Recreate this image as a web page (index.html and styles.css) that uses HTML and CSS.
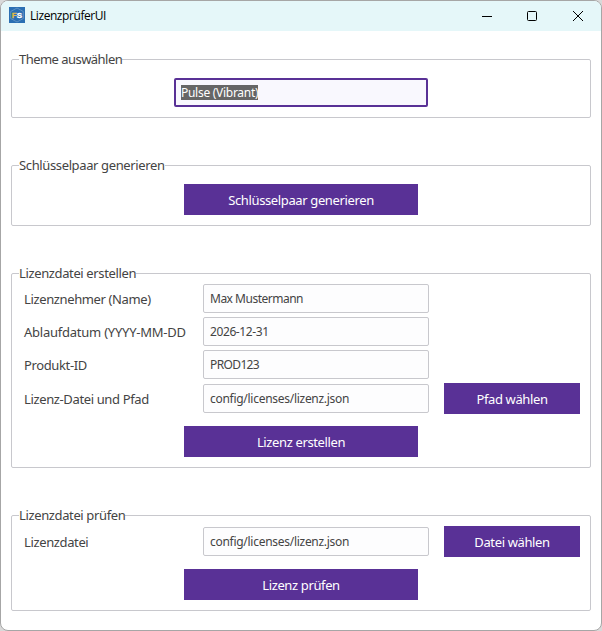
FILE: index.html
```html
<!DOCTYPE html>
<html lang="de">
<head>
<meta charset="utf-8">
<title>LizenzprüferUI</title>
<link rel="stylesheet" href="styles.css">
</head>
<body>
<div class="window">
  <header class="titlebar">
    <svg class="app-icon" width="16" height="16" viewBox="0 0 16 16">
      <rect width="16" height="16" fill="#2b6fb3"/>
      <path d="M8 1 L14.3 4.5 V11.5 L8 15 L1.7 11.5 V4.5 Z" fill="none" stroke="#83a9cd" stroke-width=".6"/>
      <text class="icon-text" x="2.8" y="11" fill="#e0bc45" stroke="#e0bc45">F</text>
      <text class="icon-text" x="7.8" y="11" fill="#ffffff" stroke="#ffffff">S</text>
    </svg>
    <span class="title">LizenzprüferUI</span>
    <div class="controls">
      <svg width="10" height="10" viewBox="0 0 10 10"><path d="M0 5.5H10" stroke="#000"/></svg>
      <svg width="10" height="10" viewBox="0 0 10 10"><rect x=".5" y=".5" width="9" height="9" rx="1" fill="none" stroke="#000"/></svg>
      <svg width="10" height="10" viewBox="0 0 10 10"><path d="M0 0L10 10M10 0L0 10" stroke="#000"/></svg>
    </div>
  </header>
  <main class="content">
    <section class="group theme">
      <h2 class="legend">Theme auswählen</h2>
      <div class="combo"><span class="selection">Pulse (Vibrant)</span></div>
    </section>
    <section class="group keys">
      <h2 class="legend">Schlüsselpaar generieren</h2>
      <button class="btn wide">Schlüsselpaar generieren</button>
    </section>
    <section class="group create">
      <h2 class="legend">Lizenzdatei erstellen</h2>
      <div class="row"><span class="label">Lizenznehmer (Name)</span><div class="field name">Max Mustermann</div></div>
      <div class="row"><span class="label date">Ablaufdatum (YYYY-MM-DD</span><div class="field code">2026-12-31</div></div>
      <div class="row"><span class="label">Produkt-ID</span><div class="field code product">PROD123</div></div>
      <div class="row browse"><span class="label">Lizenz-Datei und Pfad</span><div class="field">config/licenses/lizenz.json</div><button class="btn">Pfad wählen</button></div>
      <button class="btn wide">Lizenz erstellen</button>
    </section>
    <section class="group check">
      <h2 class="legend">Lizenzdatei prüfen</h2>
      <div class="row browse"><span class="label">Lizenzdatei</span><div class="field">config/licenses/lizenz.json</div><button class="btn">Datei wählen</button></div>
      <button class="btn wide">Lizenz prüfen</button>
    </section>
  </main>
</div>
</body>
</html>
```
FILE: styles.css
```css
* { box-sizing: border-box; }
body {
  margin: 0;
  background: #d9d9d9;
  font-family: "Noto Sans", "Open Sans", sans-serif;
  font-size: 13px;
  color: #444;
  letter-spacing: -0.37px;
}
.window {
  width: 602px;
  height: 631px;
  border: 1px solid #a6a6a6;
  border-radius: 8px;
  background: #fff;
  overflow: hidden;
}
.titlebar {
  height: 30px;
  display: flex;
  align-items: center;
  padding: 0 18px 0 8px;
  background: #e5f7f9;
}
.app-icon { margin-bottom: 2px; }
.icon-text {
  font: bold 8px "Liberation Sans", sans-serif;
  letter-spacing: 0;
  stroke-width: 0.3px;
}
.title {
  margin-left: 5px;
  font-family: "Open Sans", sans-serif;
  font-size: 12px;
  line-height: 16px;
  color: #000;
  letter-spacing: -0.43px;
}
.controls {
  margin-left: auto;
  display: flex;
  gap: 36px;
}
.controls svg { display: block; margin-bottom: 1px; }
.controls svg:first-child { margin-right: -1px; }
.content {
  display: flex;
  flex-direction: column;
  gap: 47px;
  padding: 28px 10px 0;
}
.group {
  border: 1px solid #c8c8cd;
  border-radius: 2px;
  display: flex;
  flex-direction: column;
}
.theme { height: 59px; }
.keys { height: 61px; }
.create { height: 195px; }
.check { height: 96px; }
.legend {
  align-self: flex-start;
  margin: -11px 0 1px 7px;
  height: 20px;
  line-height: 20px;
  background: #fff;
  font-size: 13px;
  font-weight: 400;
  white-space: nowrap;
}
.theme .legend { letter-spacing: -0.54px; }
.combo {
  width: 254px;
  height: 29px;
  margin: 8px 0 0 162px;
  border: 2px solid #593196;
  border-radius: 2px;
  background: #f9f8fe;
  display: flex;
  align-items: center;
  padding-left: 5px;
}
.selection {
  background: #666;
  color: #fff;
  font-size: 12px;
  line-height: 15px;
  letter-spacing: -0.28px;
  white-space: nowrap;
}
.btn {
  height: 31px;
  width: 136px;
  flex: none;
  padding: 2px 0 0;
  border: 0;
  background: #593196;
  color: #fff;
  font: inherit;
  letter-spacing: inherit;
  line-height: 29px;
}
.btn.wide {
  width: 234px;
  margin-left: 172px;
}
.keys .wide { margin-top: 8px; }
.row {
  display: grid;
  grid-template-columns: 179px 226px 136px;
  align-items: center;
  height: 29px;
  margin: 0 0 4px 12px;
}
.browse { height: 31px; margin-bottom: 12px; }
.browse .btn { margin-left: 15px; }
.label { white-space: nowrap; }
.label.date { letter-spacing: -0.24px; }
.field {
  height: 29px;
  border: 1px solid #c8c8cd;
  border-radius: 2px;
  background: #fdfdfe;
  padding-left: 6px;
  font-size: 12px;
  line-height: 27px;
  letter-spacing: -0.28px;
  white-space: nowrap;
}
.field.name { letter-spacing: -0.5px; }
.field.code { letter-spacing: -0.4px; }
.field.product { letter-spacing: -0.62px; }
```
